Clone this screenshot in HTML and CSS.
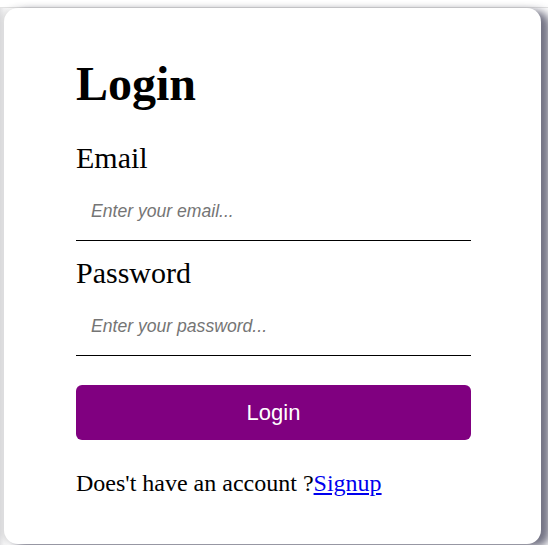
FILE: index.html
```
<!DOCTYPE html>
<html>
<head>
<meta charset="utf-8">
<link rel="stylesheet" href="styles.css">
</head>
<body>
<div class="topbar"></div>
<div class="page">
  <div class="card">
    <h1 class="title">Login</h1>
    <label class="label label-first" for="email">Email</label>
    <input class="field" id="email" type="text" placeholder="Enter your email...">
    <label class="label" for="pw">Password</label>
    <input class="field" id="pw" type="password" placeholder="Enter your password...">
    <button class="btn">Login</button>
    <p class="footer">Does't have an account ?<a href="#">Signup</a></p>
  </div>
</div>
</body>
</html>
```
FILE: styles.css
```
html, body {
  margin: 0;
  padding: 0;
  background: #fff;
  overflow: hidden;
}
.topbar {
  height: 7px;
  border-bottom: 1px solid #e2e2e2;
}
.page {
  padding-left: 4px;
  height: 545px;
  background: linear-gradient(to right, #e2e2e4 0, #f4f4f5 4px, #fff 10px);
}
.card {
  width: 537px;
  box-sizing: border-box;
  height: 536px;
  background: #fff;
  border-radius: 14px;
  padding: 40px 70px 0 72px;
  box-shadow: 9px 3px 8px rgba(90, 90, 110, 0.85), -3px 0 6px rgba(0, 0, 0, 0.1);
  font-family: "Liberation Serif", "Times New Roman", serif;
  display: flex;
  flex-direction: column;
}
.title {
  margin: 0;
  font-size: 48px;
  font-weight: bold;
  line-height: 72px;
}
.label {
  font-size: 30px;
  line-height: 34px;
  margin-top: 3px;
}
.label-first {
  margin-top: 21px;
}
.field {
  border: none;
  border-bottom: 1px solid #000;
  outline: none;
  height: 57px;
  padding: 0 15px;
  margin-top: 8px;
  margin-bottom: 12px;
  font-family: "Liberation Sans", Arial, sans-serif;
  font-size: 17.6px;
  font-style: italic;
  background: transparent;
}
.field::placeholder {
  color: #757575;
}
.btn {
  margin-top: 17px;
  height: 55px;
  border: none;
  border-radius: 6px;
  background: #800080;
  color: #fff;
  font-family: "Liberation Sans", Arial, sans-serif;
  font-size: 22px;
}
.footer {
  margin: 30px 0 0;
  font-size: 24px;
}
.footer a {
  color: #0000ee;
}
```
